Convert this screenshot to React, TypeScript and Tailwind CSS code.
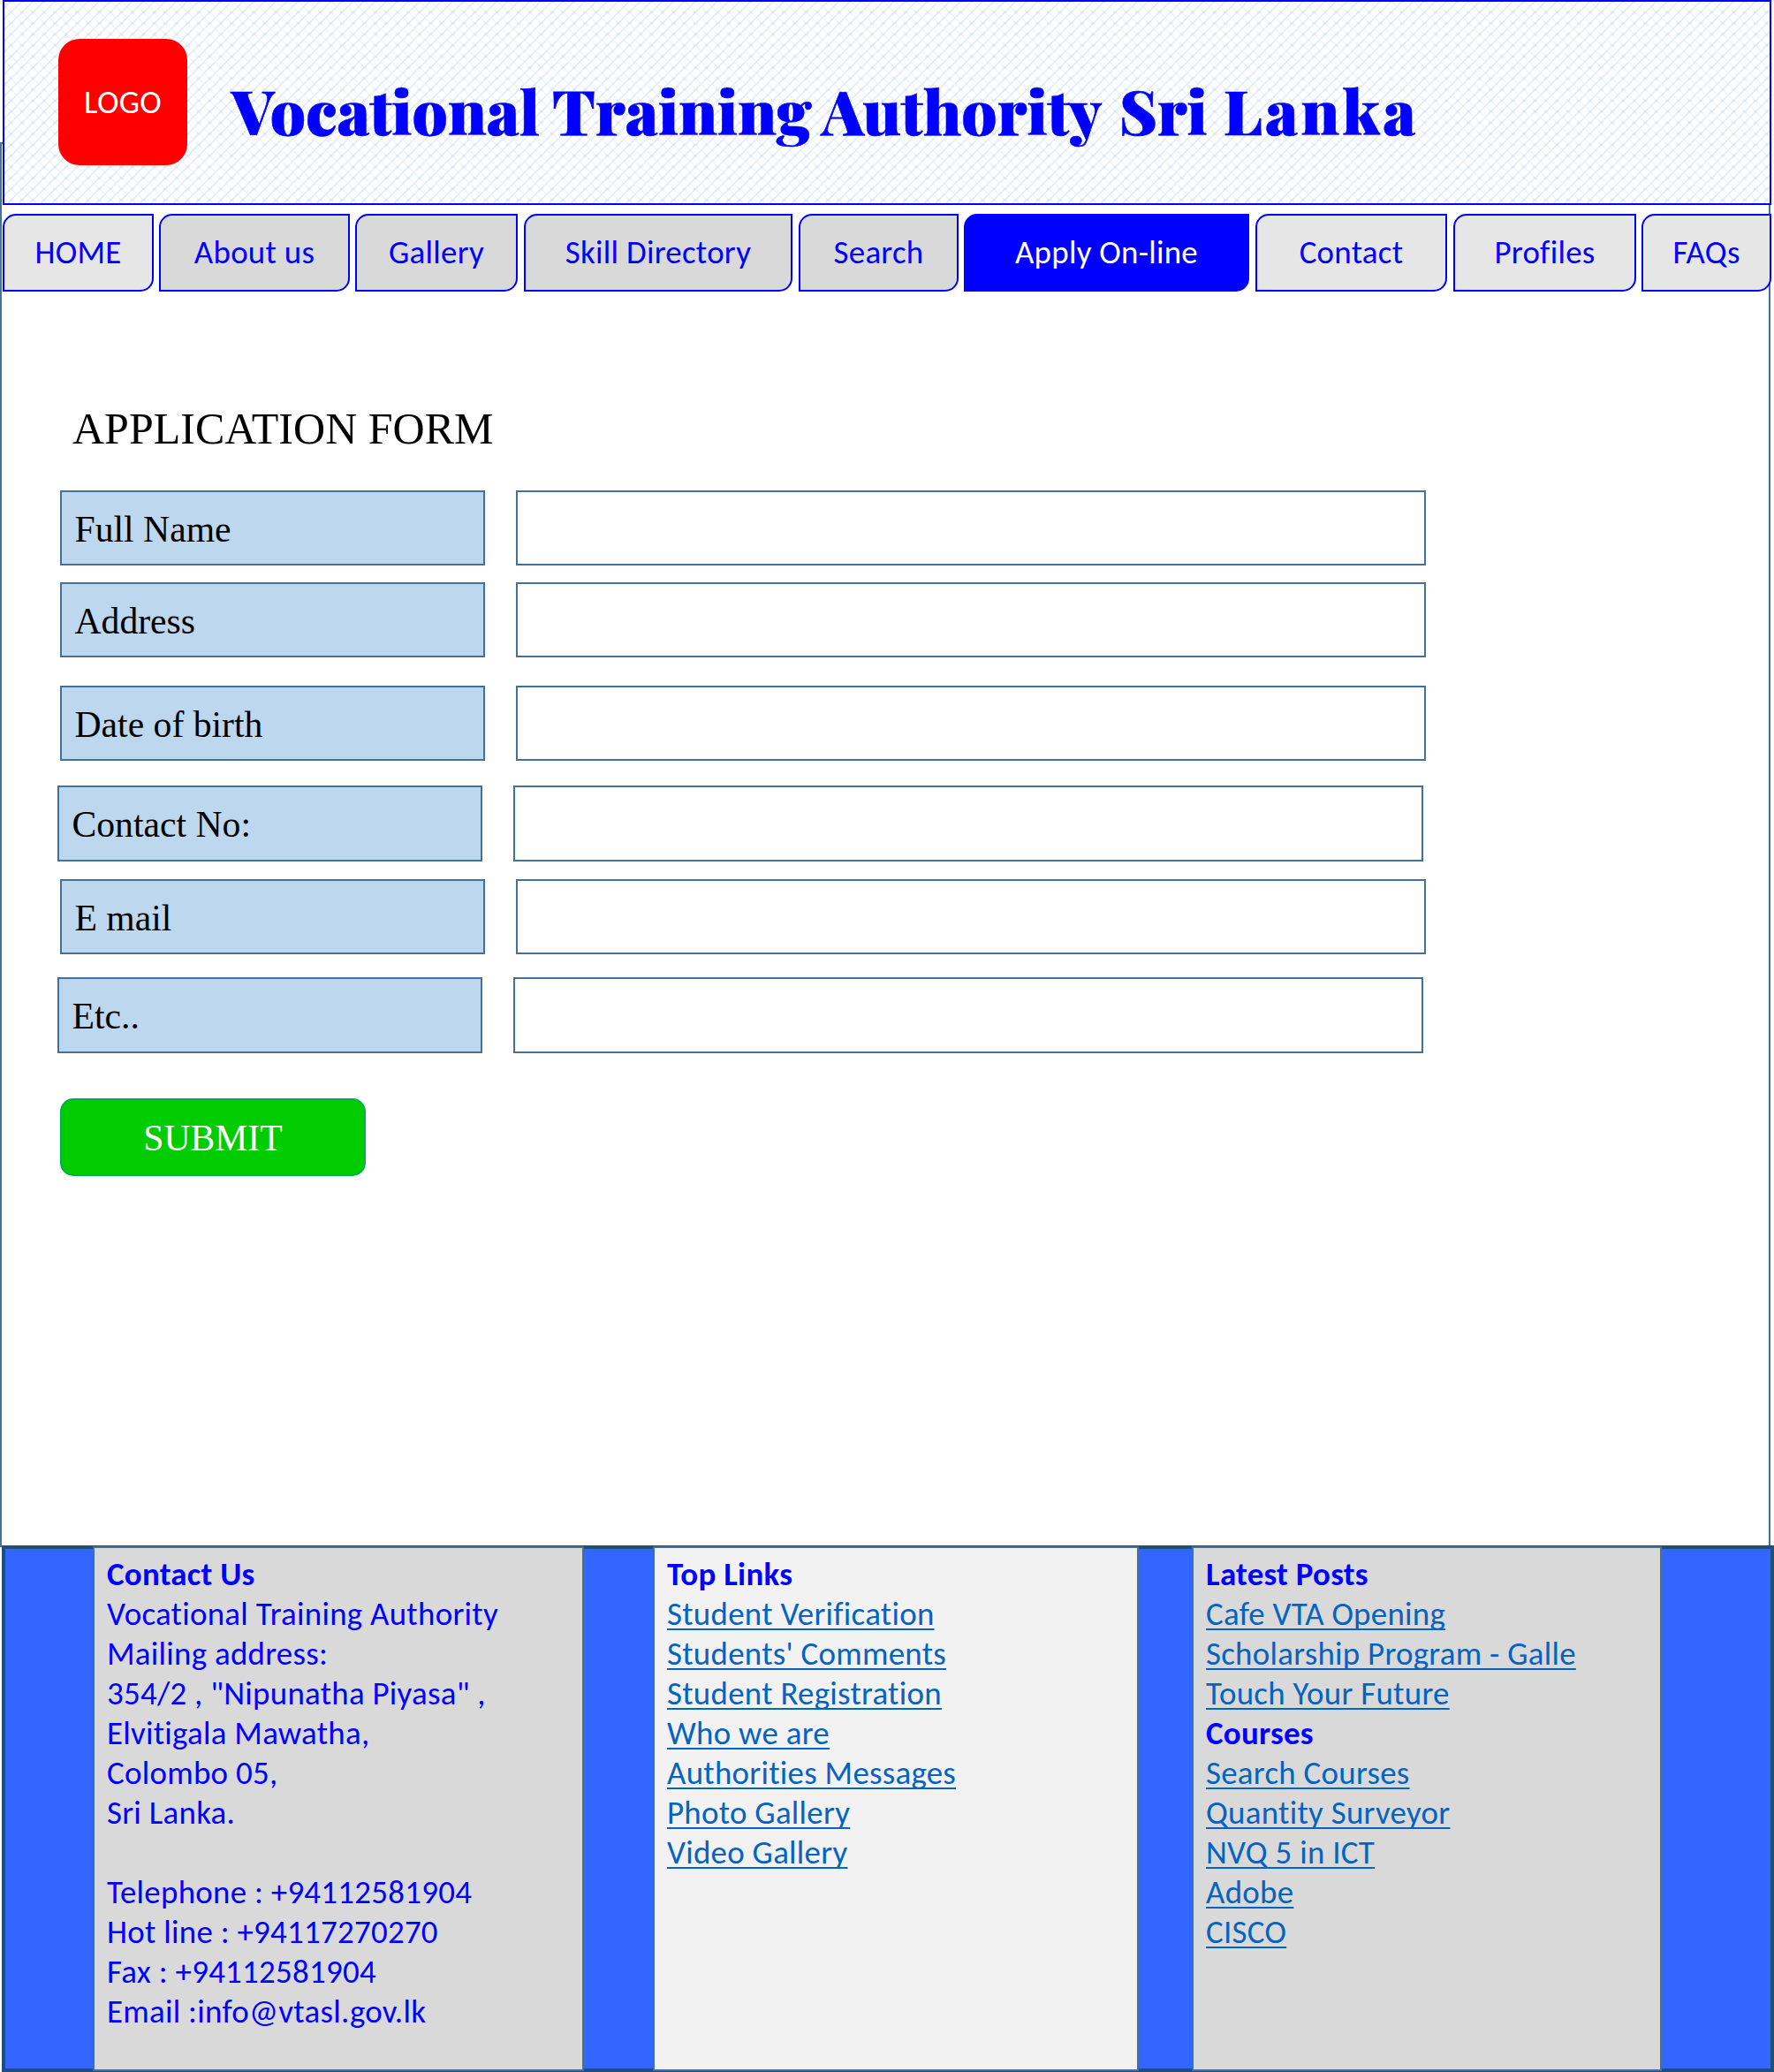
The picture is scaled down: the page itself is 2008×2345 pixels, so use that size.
const navItems = [
  { label: "HOME", box: "w-[171px] bg-[#e6e6e6]" },
  { label: "About us", box: "ml-[6px] w-[216px] bg-[#d9d9d9]" },
  { label: "Gallery", box: "ml-[6px] w-[184px] bg-[#d9d9d9]" },
  { label: "Skill Directory", box: "ml-[7px] w-[304px] bg-[#d9d9d9]" },
  { label: "Search", box: "ml-[7px] w-[181px] bg-[#d9d9d9]" },
  { label: "Apply On-line", box: "ml-[6px] w-[323px] bg-[#0000ff] text-white" },
  { label: "Contact", box: "ml-[7px] w-[217px] bg-[#e6e6e6]" },
  { label: "Profiles", box: "ml-[7px] w-[207px] bg-[#e6e6e6]" },
  { label: "FAQs", box: "ml-[6px] w-[147px] bg-[#e6e6e6]" },
];

const titleWords = [
  { text: "Vocational", box: "w-[363px] tracking-[0.1px]" },
  { text: "Training", box: "w-[305px] tracking-[0.1px]" },
  { text: "Authority", box: "w-[337px] tracking-[0.1px]" },
  { text: "Sri", box: "w-[118px] tracking-[0px]" },
  { text: "Lanka", box: "tracking-[3.2px]" },
];

const fields = [
  { label: "Full Name", row: "ml-[3px] h-[85px]" },
  { label: "Address", row: "ml-[3px] mt-[19px] h-[85px]" },
  { label: "Date of birth", row: "ml-[3px] mt-[32px] h-[85px]" },
  { label: "Contact No:", row: "mt-[28px] h-[86px]" },
  { label: "E mail", row: "ml-[3px] mt-[20px] h-[85px]" },
  { label: "Etc..", row: "mt-[26px] h-[86px]" },
];

const contactLines = [
  "Vocational Training Authority",
  "Mailing address:",
  '354/2 , "Nipunatha Piyasa" ,',
  "Elvitigala Mawatha,",
  "Colombo 05,",
  "Sri Lanka.",
  "",
  "Telephone : +94112581904",
  "Hot line : +94117270270",
  "Fax : +94112581904",
  "Email :info@vtasl.gov.lk",
];

const topLinks = [
  "Student Verification",
  "Students' Comments",
  "Student Registration",
  "Who we are",
  "Authorities Messages",
  "Photo Gallery",
  "Video Gallery",
];

const posts = ["Cafe VTA Opening", "Scholarship Program - Galle", "Touch Your Future"];
const courses = ["Search Courses", "Quantity Surveyor", "NVQ 5 in ICT", "Adobe", "CISCO"];

function Lattice() {
  return (
    <svg className="absolute inset-0 size-full" aria-hidden="true">
      <defs>
        <pattern id="lattice" x="1.2" y="5.6" width="12.5" height="12.5" patternUnits="userSpaceOnUse">
          <path d="M-1 13.5L13.5 -1" stroke="#d9e8f6" strokeWidth="1.3" />
          <path d="M-1 -1L13.5 13.5" stroke="#e8f1fa" strokeWidth="1" />
          <rect x="4.4" y="5" width="3.6" height="2.6" fill="#d9e8f6" />
        </pattern>
      </defs>
      <rect width="100%" height="100%" fill="url(#lattice)" />
    </svg>
  );
}

function Heading({ children }: { children: string }) {
  return <h3 className="font-bold">{children}</h3>;
}

function Links({ items }: { items: string[] }) {
  return (
    <ul>
      {items.map((t) => (
        <li key={t}>
          <a className="text-[#0563c1] underline decoration-2 underline-offset-4 [text-decoration-skip-ink:none]">{t}</a>
        </li>
      ))}
    </ul>
  );
}

export default function App() {
  return (
    <div className="relative flex h-[2345px] w-[2008px] flex-col overflow-hidden bg-white font-['Carlito','Calibri','Lato',sans-serif] text-[36.9px] leading-[45px] tracking-[0.28px] text-[#0000ff] [font-variant-ligatures:none]">
      <div className="absolute left-0 top-[161px] h-[1590px] w-[2004px] border-2 border-[#41719c]" />

      <header className="relative ml-[3px] flex h-[232px] w-[2002px] shrink-0 border-2 border-[#0000ff] bg-white">
        <Lattice />
        <div className="relative ml-[61px] mt-[42px] flex h-[143px] w-[146px] items-center justify-center rounded-[24px] bg-[#ff0000] text-white">
          LOGO
        </div>
        <h1 className="relative ml-[50px] mt-[82px] flex h-[80px] whitespace-pre font-['Playfair_Display','Noto_Serif_Display','Liberation_Serif',serif] text-[70px] font-black leading-[80px] [-webkit-text-stroke:0.6px_#0000ff]">
          {titleWords.map((w) => (
            <span key={w.text} className={w.box}>
              {w.text}{" "}
            </span>
          ))}
        </h1>
      </header>

      <nav className="relative ml-[3px] mt-[10px] flex h-[88px] shrink-0">
        {navItems.map((n) => (
          <a
            key={n.label}
            className={`flex shrink-0 items-center justify-center whitespace-nowrap rounded-br-[15px] rounded-tl-[15px] border-2 border-[#0000ff] pb-px ${n.box}`}
          >
            {n.label}
          </a>
        ))}
      </nav>

      <main className="relative flex h-[1419px] shrink-0 flex-col pl-[65px] pt-[127px] font-['Liberation_Serif','Times_New_Roman',serif] text-[41.67px] leading-[46px] tracking-normal text-black">
        <h2 className="ml-[17px] h-[98px] text-[50px] leading-[56px]">APPLICATION FORM</h2>
        {fields.map((f) => (
          <div key={f.label} className={`flex shrink-0 ${f.row}`}>
            <label className="w-[481px] border-2 border-[#41719c] bg-[#bdd7ee] pl-[14.5px] pt-[19px]">{f.label}</label>
            <div className="ml-[35px] w-[1030px] border-2 border-[#41719c] bg-white" />
          </div>
        ))}
        <button className="ml-[3px] mt-[51px] flex h-[88px] w-[346px] shrink-0 justify-center rounded-[15px] border-2 border-[#00b050] bg-[#00cc00] pt-[20px] text-white">
          SUBMIT
        </button>
      </main>

      <footer className="relative ml-[2px] flex h-[596px] w-[2006px] shrink-0 border-4 border-[#1f4e79] bg-[#3366ff]">
        <section className="-mb-[3px] -mt-[3px] ml-[99px] w-[556px] border-2 border-[#41719c] bg-[#d9d9d9] pl-[14px] pt-[7px]">
          <Heading>Contact Us</Heading>
          {contactLines.map((t, i) => (
            <p key={i} className="h-[45px] whitespace-nowrap">
              {t}
            </p>
          ))}
        </section>
        <section className="-mb-[3px] -mt-[3px] ml-[78px] w-[550px] border-2 border-[#41719c] bg-[#f2f2f2] pl-[14px] pt-[7px]">
          <Heading>Top Links</Heading>
          <Links items={topLinks} />
        </section>
        <section className="-mb-[3px] -mt-[3px] ml-[60px] w-[532px] border-2 border-[#41719c] bg-[#d9d9d9] pl-[14px] pt-[7px]">
          <Heading>Latest Posts</Heading>
          <Links items={posts} />
          <Heading>Courses</Heading>
          <Links items={courses} />
        </section>
      </footer>
    </div>
  );
}
